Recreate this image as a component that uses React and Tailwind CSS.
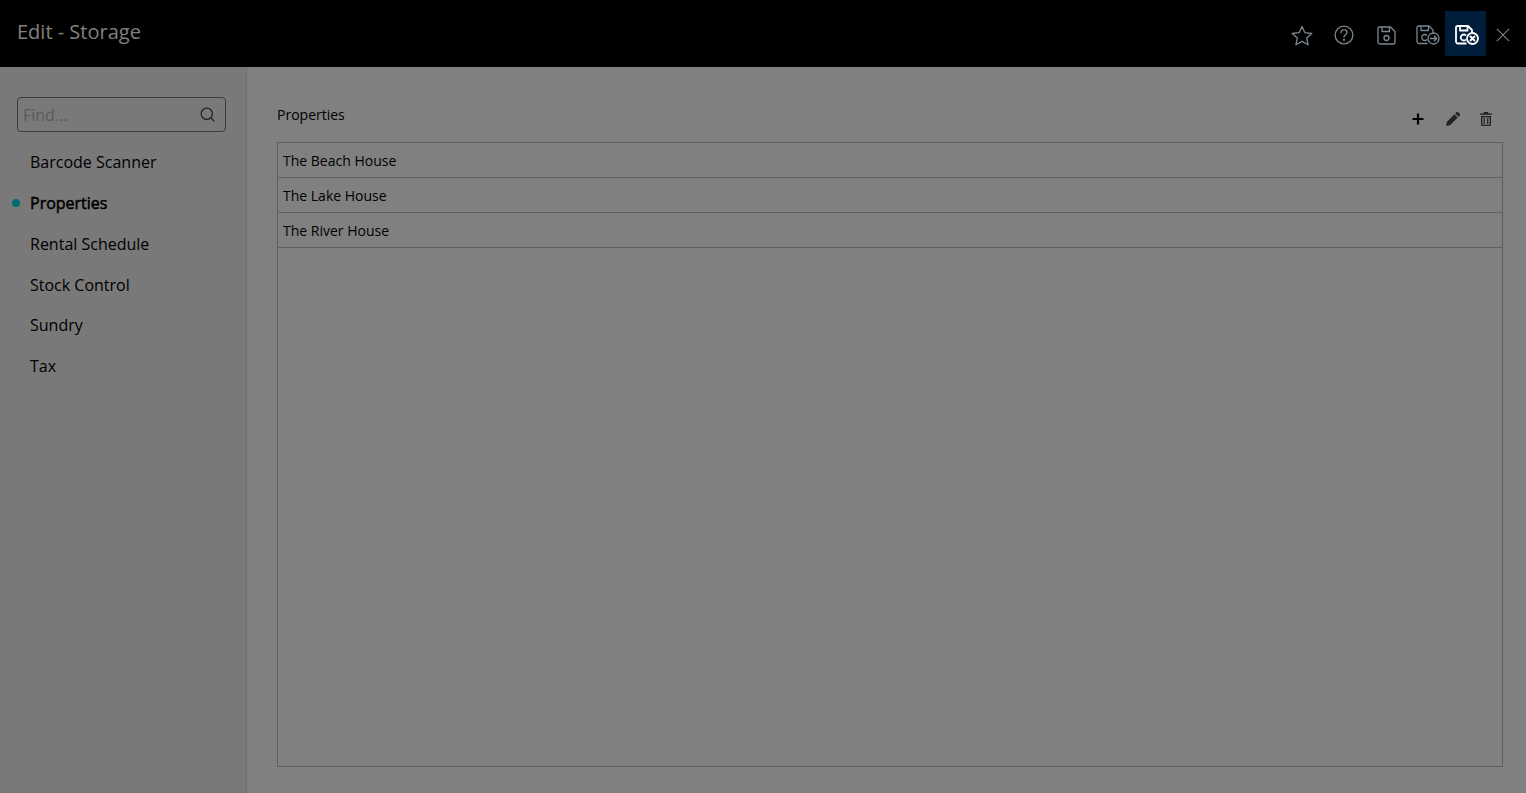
import React from "react";
import { Search } from "lucide-react";

const Star = () => (
  <svg width="22" height="21" viewBox="0 0 22 21" fill="none" stroke="currentColor" strokeWidth="1.300" strokeLinejoin="round">
    <path d="M11 1.500l2.900 6.200 6.900.8-5.100 4.600 1.400 6.700-6.100-3.400-6.100 3.400 1.400-6.700L1.200 8.500l6.900-.8z" />
  </svg>
);
const Help = () => (
  <svg width="20" height="20" viewBox="0 0 20 20" fill="none" stroke="currentColor" strokeWidth="1.300" strokeLinecap="round">
    <circle cx="10" cy="10" r="8.900" />
    <path d="M7 7.800c0-1.800 1.400-2.900 3.100-2.900s2.900 1.100 2.900 2.600c0 2.300-3 2.300-3 4.600" />
    <circle cx="10" cy="14.800" r=".5" />
  </svg>
);
const Save = () => (
  <svg width="19" height="19" viewBox="0 0 19 19" fill="none" stroke="currentColor" strokeWidth="1.300" strokeLinejoin="round">
    <path d="M2.500 1h11l4.500 4.500V16a2 2 0 0 1-2 2H3a2 2 0 0 1-2-2V2.500A1.500 1.500 0 0 1 2.500 1z" />
    <path d="M5 1v4.500h7.500V1" />
    <circle cx="9.500" cy="12" r="2.500" />
  </svg>
);
const SaveGo = () => (
  <svg width="24" height="20" viewBox="0 0 24 20" fill="none" stroke="currentColor" strokeWidth="1.300" strokeLinejoin="round">
    <path d="M11.500 18.500H3a2 2 0 0 1-2-2V2.500A1.500 1.500 0 0 1 2.500 1h10.500l4 4v4" />
    <path d="M5 1v4.500h7.500V1" />
    <path d="M11 10.500a3 3 0 1 0 0 4" />
    <circle cx="17.500" cy="13.500" r="5.500" />
    <path d="M14 13.500h6.500M18 10.800l2.700 2.700-2.700 2.700" strokeWidth="1.500" />
  </svg>
);
const SaveClose = () => (
  <svg width="24" height="20" viewBox="0 0 24 20" fill="none" stroke="currentColor" strokeWidth="1.800" strokeLinejoin="round">
    <path d="M11.500 18.500H3a2 2 0 0 1-2-2V2.500A1.500 1.500 0 0 1 2.500 1h10.500l4 4v3" />
    <path d="M5 1v4.500h7.500V1" />
    <path d="M11 10.500a3 3 0 1 0 0 4" />
    <circle cx="17.500" cy="13.500" r="5.500" />
    <path d="M15 11l5 5M20 11l-5 5" strokeWidth="2" />
  </svg>
);
const Close = () => (
  <svg width="14" height="14" viewBox="0 0 14 14" fill="none" stroke="currentColor" strokeWidth="1.100">
    <path d="M.8.800l12.400 12.400M13.200.800L.8 13.200" />
  </svg>
);
const Plus = () => (
  <svg width="12" height="12" viewBox="0 0 12 12" fill="none" stroke="currentColor" strokeWidth="2.200">
    <path d="M6 .5v11M.5 6h11" />
  </svg>
);
const Pencil = () => (
  <svg width="15" height="15" viewBox="0 0 15 15" fill="currentColor">
    <path d="M10.600 1.100a1 1 0 0 1 1.400 0l1.900 1.900a1 1 0 0 1 0 1.400l-1.300 1.300-3.300-3.300zM8.400 3.300l3.300 3.300-7.600 7.600-3.800.8.500-4.100z" />
  </svg>
);
const Trash = () => (
  <svg width="12" height="14" viewBox="0 0 12 14" fill="currentColor">
    <path d="M4 0h4l.6 1.500H12v1.300H0V1.500h3.400z" />
    <path fillRule="evenodd" d="M1 4h10v8.500A1.500 1.500 0 0 1 9.500 14h-7A1.500 1.500 0 0 1 1 12.500zm1.400 1.300v7.400h7.200V5.300z" />
    <path d="M3.700 6h1.200v6H3.700zM7.100 6h1.200v6H7.100z" />
  </svg>
);

const nav = ["Barcode Scanner", "Properties", "Rental Schedule", "Stock Control", "Sundry", "Tax"];
const rows = ["The Beach House", "The Lake House", "The River House"];

export default function App() {
  return (
    <div className="flex h-[793px] flex-col overflow-hidden bg-[#808080] text-black" style={{ fontFamily: '"Open Sans", sans-serif' }}>
      <header className="flex h-[67px] shrink-0 items-center justify-between bg-black pl-[17px] pr-[7px]">
        <h1 className="pb-[3px] text-[20px] leading-none text-[#808080]">Edit - Storage</h1>
        <div className="flex items-center text-[#7b8791]">
          <div className="flex h-[45px] w-[42px] items-center justify-center pl-[8px] pt-[3px]"><Star /></div>
          <div className="flex h-[45px] w-[42px] items-center justify-center pl-[8px] pt-[3px]"><Help /></div>
          <div className="flex h-[45px] w-[42px] items-center justify-center pl-[8px] pt-[3px]"><Save /></div>
          <div className="flex h-[45px] w-[42px] items-center justify-center pl-[8px] pt-[3px]"><SaveGo /></div>
          <div className="flex h-[45px] w-[41px] items-center justify-center bg-[#001e3c] pl-[3px] pt-[3px] text-white"><SaveClose /></div>
          <div className="flex h-[45px] w-[33px] items-center justify-center pt-[3px] text-[#808080]"><Close /></div>
        </div>
      </header>
      <div className="flex min-h-0 flex-1">
        <aside className="w-[247px] shrink-0 border-r border-[#707070] bg-[#797979] pt-[30px]">
          <div className="ml-[17px] flex h-[35px] w-[209px] items-center justify-between rounded-[4px] border border-[#3c3c3c] pl-[5px] pr-[9px]">
            <span className="text-[16px] text-[#5a5a5a]">Find...</span>
            <Search size={17} strokeWidth={1.800} className="text-[#222222]" />
          </div>
          <nav className="mt-[9.800px]">
            {nav.map((n) => (
              <div key={n} className="relative flex h-[40.800px] items-center pl-[30px] text-[16px] text-black">
                {n === "Properties" && <span className="absolute left-[12px] top-[16px] h-[8px] w-[8px] rounded-full bg-[#006b70]" />}
                <span className={n === "Properties" ? "[-webkit-text-stroke:0.5px_black]" : ""}>{n}</span>
              </div>
            ))}
          </nav>
        </aside>
        <main className="flex min-w-0 flex-1 flex-col pl-[30px] pr-[23px] pt-[30px] pb-[26px]">
          <div className="flex h-[45px] shrink-0 items-start justify-between">
            <span className="mt-[7px] text-[14px] leading-[21px]">Properties</span>
            <div className="mr-[11px] mt-[14px] flex items-center">
              <span className="text-black"><Plus /></span>
              <span className="ml-[22px] text-[#222222]"><Pencil /></span>
              <span className="ml-[19px] text-[#222222]"><Trash /></span>
            </div>
          </div>
          <div className="min-h-0 flex-1 border border-[#5f5f5f]">
            {rows.map((r) => (
              <div key={r} className="flex h-[35px] items-center border-b border-[#5f5f5f] pl-[5px] text-[14px]">{r}</div>
            ))}
          </div>
        </main>
      </div>
    </div>
  );
}
